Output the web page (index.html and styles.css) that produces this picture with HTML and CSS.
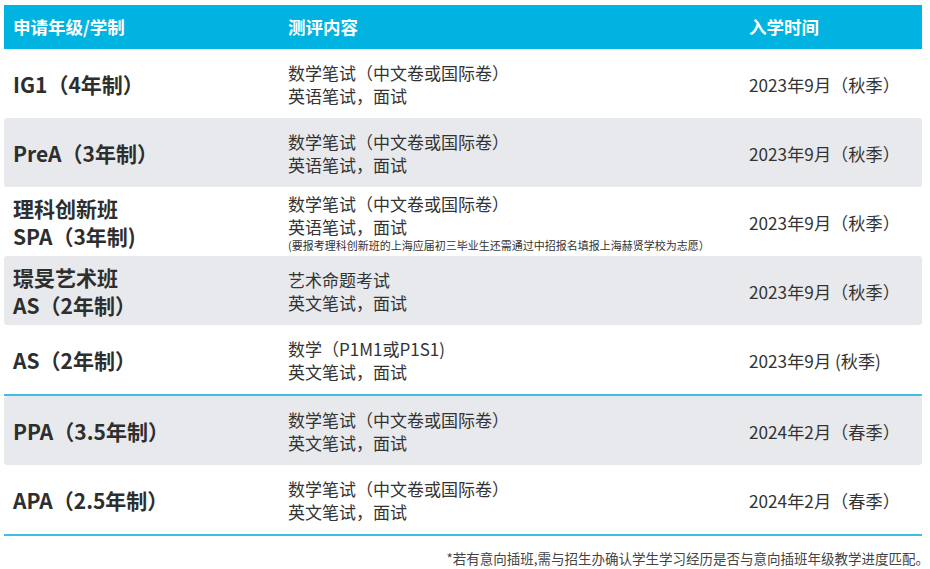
FILE: index.html
```html
<!DOCTYPE html>
<html lang="zh-CN">
<head>
<meta charset="utf-8">
<link rel="stylesheet" href="styles.css">
</head>
<body>
<div class="page">
  <div class="table">
    <div class="row head">
      <div class="c1">申请年级/学制</div>
      <div class="c2">测评内容</div>
      <div class="c3">入学时间</div>
    </div>
    <div class="row">
      <div class="c1">IG1（4年制）</div>
      <div class="c2"><div>数学笔试（中文卷或国际卷）</div><div>英语笔试，面试</div></div>
      <div class="c3">2023年9月（秋季）</div>
    </div>
    <div class="row gray">
      <div class="c1">PreA（3年制）</div>
      <div class="c2"><div>数学笔试（中文卷或国际卷）</div><div>英语笔试，面试</div></div>
      <div class="c3">2023年9月（秋季）</div>
    </div>
    <div class="row">
      <div class="c1"><div>理科创新班</div><div>SPA（3年制)</div></div>
      <div class="c2"><div>数学笔试（中文卷或国际卷）</div><div>英语笔试，面试</div><div class="note">(要报考理科创新班的上海应届初三毕业生还需通过中招报名填报上海赫贤学校为志愿）</div></div>
      <div class="c3">2023年9月（秋季）</div>
    </div>
    <div class="row gray">
      <div class="c1"><div>璟旻艺术班</div><div>AS（2年制）</div></div>
      <div class="c2"><div>艺术命题考试</div><div>英文笔试，面试</div></div>
      <div class="c3">2023年9月（秋季）</div>
    </div>
    <div class="row">
      <div class="c1">AS（2年制）</div>
      <div class="c2"><div>数学（P1M1或P1S1)</div><div>英文笔试，面试</div></div>
      <div class="c3">2023年9月 (秋季)</div>
    </div>
    <div class="rule"></div>
    <div class="row gray">
      <div class="c1">PPA（3.5年制）</div>
      <div class="c2"><div>数学笔试（中文卷或国际卷）</div><div>英文笔试，面试</div></div>
      <div class="c3">2024年2月（春季）</div>
    </div>
    <div class="row">
      <div class="c1">APA（2.5年制）</div>
      <div class="c2"><div>数学笔试（中文卷或国际卷）</div><div>英文笔试，面试</div></div>
      <div class="c3">2024年2月（春季）</div>
    </div>
    <div class="rule"></div>
  </div>
  <div class="foot">*若有意向插班,需与招生办确认学生学习经历是否与意向插班年级教学进度匹配。</div>
</div>
</body>
</html>
```

FILE: styles.css
```css
html, body {
  margin: 0;
  padding: 0;
  background: #ffffff;
}
body {
  font-family: "Noto Sans CJK SC", "Noto Sans", sans-serif;
  color: #333333;
}
.page {
  padding: 5px 6px 0 4px;
}
.table {
  display: flex;
  flex-direction: column;
  margin-right: 2px;
}
.row {
  display: grid;
  grid-template-columns: 275px 461px 1fr;
  align-items: center;
  height: 69px;
  padding-left: 9px;
  box-sizing: border-box;
  border-radius: 3px;
}
.row.head {
  height: 44px;
  background: #00b3e0;
  border-radius: 0;
}
.row.head .c1, .row.head .c2, .row.head .c3 {
  font-size: 17.5px;
  font-weight: 700;
  color: #ffffff;
  line-height: 24px;
  padding-top: 0;
}
.row.gray {
  background: #e8e9ec;
}
.c1 {
  font-size: 21px;
  font-weight: 700;
  line-height: 28px;
  color: #2e2e2e;
  padding-top: 1px;
}
.c2 {
  font-size: 17px;
  line-height: 23px;
  color: #333333;
}
.c3 {
  font-size: 17.2px;
  line-height: 22px;
  color: #333333;
  padding-top: 2px;
}
.note {
  font-size: 11px;
  line-height: 14px;
}
.rule {
  height: 2px;
  background: #3fbfe2;
}
.foot {
  text-align: right;
  font-size: 13.5px;
  line-height: 20px;
  color: #444444;
  margin-top: 12px;
  margin-right: -5px;
}
```
